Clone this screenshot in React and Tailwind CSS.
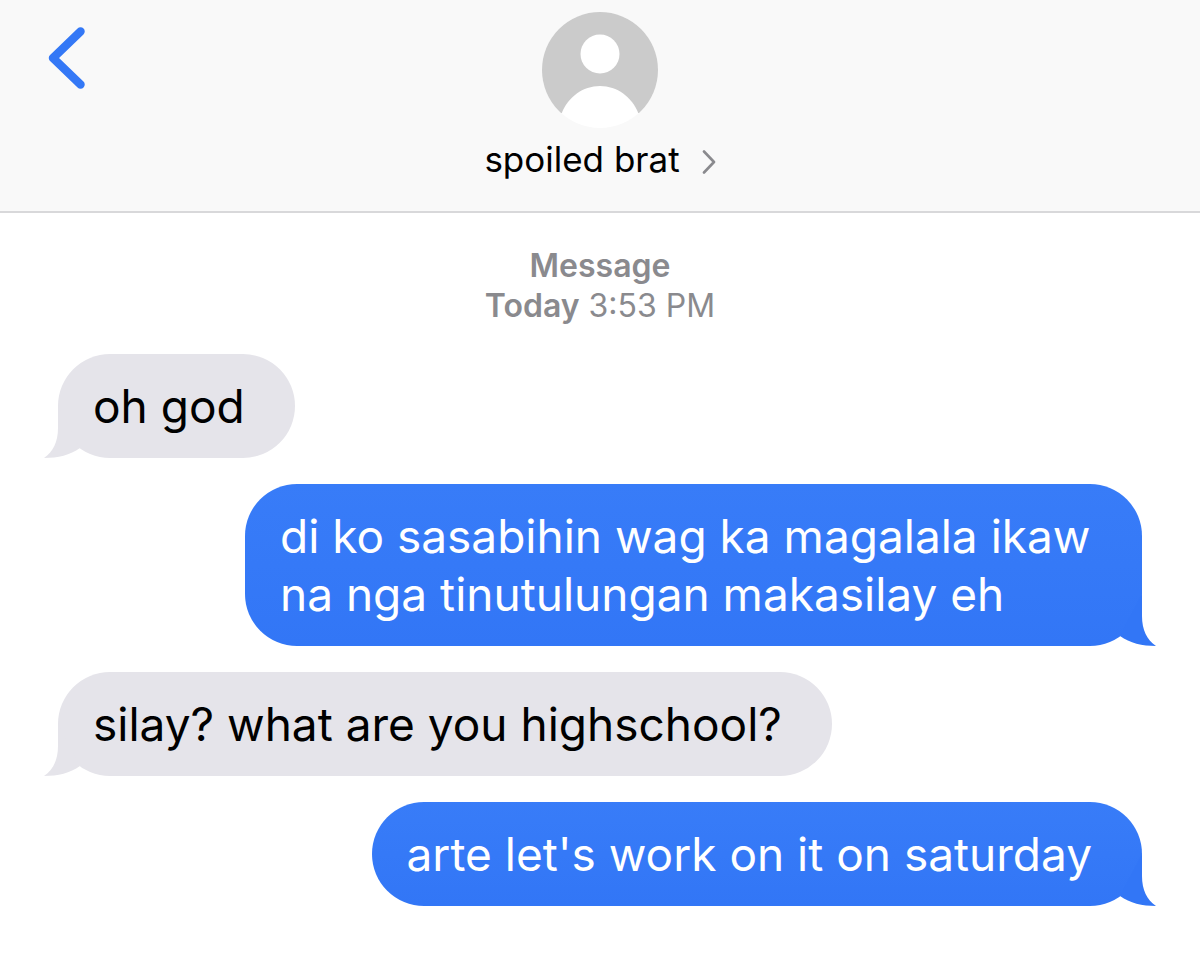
import { useId } from 'react';

const messages = [
  { id: 1, mine: false, text: 'oh god' },
  { id: 2, mine: true, text: 'di ko sasabihin wag ka magalala ikaw na nga tinutulungan makasilay eh' },
  { id: 3, mine: false, text: 'silay? what are you highschool?' },
  { id: 4, mine: true, text: "arte let's work on it on saturday" },
];

const Avatar = () => {
  const clip = useId();

  return (
    <svg viewBox="0 0 116 116" className="size-[116px]" aria-hidden="true">
      <clipPath id={clip}>
        <rect width="116" height="101" />
      </clipPath>
      <circle cx="58" cy="58" r="58" fill="#fff" />
      <g clipPath={`url(#${clip})`}>
        <circle cx="58" cy="58" r="58" fill="#cbcbcb" />
        <path d="M19 103C25 86 40 74 58 74s33 12 39 29z" fill="#fff" />
      </g>
      <circle cx="58" cy="42" r="19.5" fill="#fff" />
    </svg>
  );
};

const Header = () => (
  <header className="grid grid-cols-[1fr_auto_1fr] items-start border-b-2 border-[#d8d8da] bg-[#f9f9f9] px-12 pt-3 pb-[30px]">
    <button type="button" aria-label="Back" className="mt-[15px] justify-self-start">
      <svg viewBox="0 0 38 62" className="h-[62px] w-[38px]" fill="none" stroke="#3478f6" strokeWidth="8.5" strokeLinecap="round" strokeLinejoin="round">
        <path d="M32.5 4.5L5 31l27.5 26.5" />
      </svg>
    </button>
    <button type="button" className="flex flex-col items-center gap-[10px]">
      <Avatar />
      <span className="flex items-center gap-[22px] text-[35px] leading-[43px]">
        spoiled brat
        <svg viewBox="0 0 14 24" className="mt-1 h-6 w-[14px]" fill="none" stroke="#8a8a8e" strokeWidth="2.6" strokeLinecap="round" strokeLinejoin="round" aria-hidden="true">
          <path d="M2 1.5L12 12 2 22.5" />
        </svg>
      </span>
    </button>
  </header>
);

const Bubble = ({ mine, text }) => (
  <li
    className={`relative max-w-[897px] rounded-[52px] py-[23px] pr-[50px] pl-[35px] text-[46px] leading-[58px] ${
      mine ? 'self-end bg-linear-to-b from-[#387cf8] to-[#3276f6] text-white' : 'self-start bg-[#e5e4ea] text-black'
    }`}
  >
    {text}
    <svg
      viewBox="0 0 36 52"
      className={`absolute bottom-0 h-[52px] w-9 ${mine ? '-right-[14px] -scale-x-100 text-[#3276f6]' : '-left-[14px] text-[#e5e4ea]'}`}
      fill="currentColor"
      aria-hidden="true"
    >
      <path d="M14 0V22C14 36 9 46 0 52C14 52 26 49 36 42z" />
    </svg>
  </li>
);

const App = () => (
  <div className="min-h-screen bg-white font-['Inter','Liberation_Sans',sans-serif] text-black">
    <Header />
    <main className="px-[58px] pt-[33px] pb-10">
      <p className="text-center text-[32px] leading-10 text-[#8a8a8e]">
        <span className="block font-semibold">Message</span>
        <span className="font-semibold">Today</span> 3:53 PM
      </p>
      <ul className="mt-7 flex flex-col gap-[26px]">
        {messages.map((m) => (
          <Bubble key={m.id} mine={m.mine} text={m.text} />
        ))}
      </ul>
    </main>
  </div>
);

export default App;
